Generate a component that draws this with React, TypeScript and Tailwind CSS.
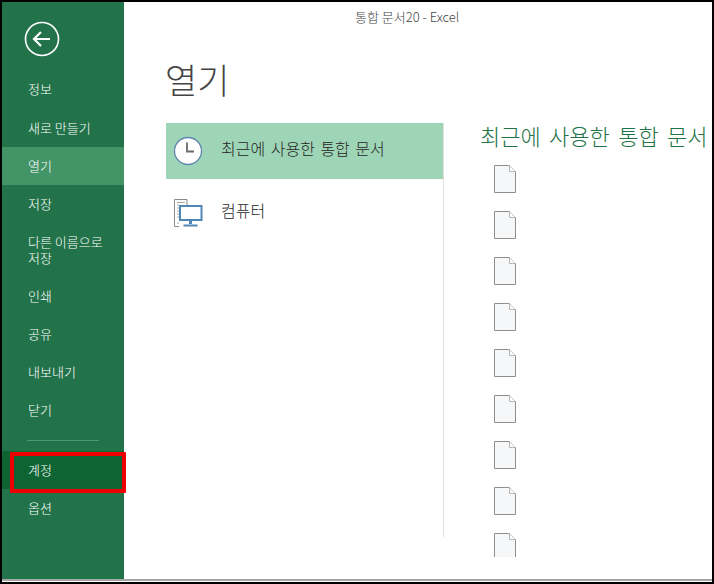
import React from 'react';

const FONT = "font-['Noto_Sans_CJK_KR','Liberation_Sans',sans-serif]";

type NavItem = { label: string; h: string; active?: string };

const topItems: NavItem[] = [
  { label: '정보', h: 'h-[38px]' },
  { label: '새로 만들기', h: 'h-[39px]' },
  { label: '열기', h: 'h-[38px]', active: 'bg-[#439467]' },
  { label: '저장', h: 'h-[38px]' },
  { label: '다른 이름으로 저장', h: 'h-[54px]' },
  { label: '인쇄', h: 'h-[38px]' },
  { label: '공유', h: 'h-[38px]' },
  { label: '내보내기', h: 'h-[38px]' },
  { label: '닫기', h: 'h-[38px]' },
];

const bottomItems: NavItem[] = [
  { label: '계정', h: 'h-[38px]', active: 'bg-[#0f6434]' },
  { label: '옵션', h: 'h-[38px]' },
];

const NavRow = ({ item }: { item: NavItem }) => (
  <div className={`${item.h} ${item.active ?? ''} flex items-center pl-[26px] pr-[14px] text-[13px] font-light leading-[16px] text-white`}>
    <span className="block w-[80px]">{item.label}</span>
  </div>
);

const BackIcon = () => (
  <svg width="36" height="36" viewBox="0 0 36 36" fill="none" stroke="white">
    <circle cx="18" cy="18" r="16.5" strokeWidth="1.6" />
    <path d="M10 18H26M17 11L10 18L17 25" strokeWidth="2.2" />
  </svg>
);

const ClockIcon = () => (
  <svg width="30" height="30" viewBox="0 0 30 30" fill="none">
    <circle cx="15" cy="15" r="13.5" fill="white" stroke="#5f86ae" strokeWidth="1.3" />
    <path d="M14 6.5V15.5H21" stroke="#6b6b6b" strokeWidth="1.8" />
  </svg>
);

const ComputerIcon = () => (
  <svg width="30" height="32" viewBox="0 0 30 32" fill="none">
    <path d="M14 4.5H1.5V31.5H6" stroke="#8a8a8a" />
    <path d="M14 4.5V10" stroke="#8a8a8a" />
    <path d="M4 7.5H12M4 10H6M4 13H6M4 16H6M4 19H6M4 22H6M4 28H6" stroke="#a8a8a8" />
    <rect x="7" y="11" width="21.5" height="14" fill="white" stroke="#4f86b3" strokeWidth="2" />
    <path d="M17.5 26V29" stroke="#4f86b3" strokeWidth="3" />
    <path d="M10.5 30.5H24.5" stroke="#4f86b3" strokeWidth="2" />
  </svg>
);

const FileIcon = () => (
  <svg width="22" height="28" viewBox="0 0 22 28" fill="none" className="block shrink-0">
    <path d="M0.5 0.5H15.5L21.5 6.5V27.5H0.5Z" fill="#f6f7f8" stroke="#8f8f8f" />
    <path d="M15.5 0.5V6.5H21.5" fill="#ffffff" stroke="#b5b5b5" />
  </svg>
);

const App: React.FC = () => {
  return (
    <div className={`${FONT} h-[584px] w-[714px] overflow-hidden bg-black pl-[2px] pr-[2px] pt-[2px]`}>
      <div className="relative flex h-[580px] w-[710px] flex-col bg-white">
        <div className="flex h-[577px] w-full">
          {/* backstage nav */}
          <aside className="flex h-full w-[122px] shrink-0 flex-col bg-[#23734a]">
            <div className="h-[68px] pl-[22px] pt-[19px]">
              <BackIcon />
            </div>
            {topItems.map(item => (
              <NavRow key={item.label} item={item} />
            ))}
            <div className="pb-[10px] pl-[25px] pt-[11px]">
              <div className="h-px w-[72px] bg-[#4f9a72]" />
            </div>
            {bottomItems.map(item => (
              <NavRow key={item.label} item={item} />
            ))}
          </aside>

          <main className="relative min-w-0 flex-1 overflow-hidden">
            <div className="pt-[7px] pl-[231px] text-[13px] font-light leading-[16px] text-[#444444]">통합 문서20 - Excel</div>
            <h1 className="pl-[41px] pt-[32px] text-[35px] font-light leading-[44px] text-[#444444]">열기</h1>

            <div className="mt-[22px] flex pl-[42px]">
              <div className="h-[414px] w-[278px] shrink-0 border-r border-[#e1e1e1]">
                <div className="flex h-[56px] w-[277px] items-center bg-[#9fd5b7] pl-[7px] text-[#262626]">
                  <ClockIcon />
                  <span className="ml-[18px] -translate-y-[3px] text-[16px] font-light [word-spacing:2px]">최근에 사용한 통합 문서</span>
                </div>
                <div className="flex h-[64px] items-center pl-[7px] text-[#262626]">
                  <ComputerIcon />
                  <span className="ml-[18px] -translate-y-[1px] text-[16px] font-light">컴퓨터</span>
                </div>
              </div>

              <section className="-mt-[3px] min-w-0 flex-1 overflow-hidden pl-[36px]">
                <h2 className="h-[36px] whitespace-nowrap text-[22px] font-light leading-[30px] text-[#217346] [word-spacing:3.5px]">
                  최근에 사용한 통합 문서
                </h2>
                <div className="flex h-[401px] flex-col gap-[18px] overflow-hidden pl-[14px] pt-[9px]">
                  {Array.from({ length: 9 }).map((_, i) => (
                    <FileIcon key={i} />
                  ))}
                </div>
              </section>
            </div>
          </main>
        </div>
        <div className="mt-auto h-[3px] w-full border-t-2 border-[#a6a6a6] bg-white" />

        {/* red highlight drawn over the screenshot */}
        <div className="absolute left-[8px] top-[450px] h-[41px] w-[116px] rounded-[1px] border-4 border-[#ee0000]" />
      </div>
    </div>
  );
};

export default App;
